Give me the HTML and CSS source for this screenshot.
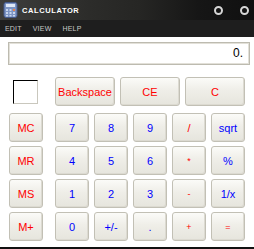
FILE: index.html
```html
<!DOCTYPE html>
<html lang="en">
<head>
    <meta charset="UTF-8">
    <title>Calculator</title>
    <link rel="stylesheet" href="styles.css">
</head>
<body>
    <div class="window">
        <!-- Title bar -->
        <div class="title-bar">
            <svg class="app-icon" width="16" height="16" viewBox="0 0 16 16">
                <rect x="1" y="0.5" width="13" height="15" rx="2" fill="#7d95c4" stroke="#44598a"/>
                <rect x="3" y="2" width="9" height="3" fill="#dfe8f6"/>
                <g fill="#c8d6ee">
                    <rect x="3" y="7" width="2" height="2"/><rect x="6.5" y="7" width="2" height="2"/><rect x="10" y="7" width="2" height="2" fill="#e8824a"/>
                    <rect x="3" y="10" width="2" height="2"/><rect x="6.5" y="10" width="2" height="2"/><rect x="10" y="10" width="2" height="2"/>
                    <rect x="3" y="13" width="2" height="1.5"/><rect x="6.5" y="13" width="2" height="1.5"/><rect x="10" y="13" width="2" height="1.5"/>
                </g>
            </svg>
            <span class="title">CALCULATOR</span>
            <span class="ring ring-min"></span>
            <span class="ring"></span>
        </div>

        <!-- Menu -->
        <div class="menu-bar">
            <span>EDIT</span>
            <span>VIEW</span>
            <span>HELP</span>
        </div>

        <div class="panel">
            <div class="display">0.</div>

            <div class="top-row">
                <div class="mem-box"></div>
                <button class="key wide red">Backspace</button>
                <button class="key wide red">CE</button>
                <button class="key wide red">C</button>
            </div>

            <div class="keypad">
                <button class="key red">MC</button>
                <button class="key blue">7</button>
                <button class="key blue">8</button>
                <button class="key blue">9</button>
                <button class="key red">/</button>
                <button class="key blue">sqrt</button>

                <button class="key red">MR</button>
                <button class="key blue">4</button>
                <button class="key blue">5</button>
                <button class="key blue">6</button>
                <button class="key red small">*</button>
                <button class="key blue">%</button>

                <button class="key red">MS</button>
                <button class="key blue">1</button>
                <button class="key blue">2</button>
                <button class="key blue">3</button>
                <button class="key red small">-</button>
                <button class="key blue">1/x</button>

                <button class="key red">M+</button>
                <button class="key blue">0</button>
                <button class="key blue">+/-</button>
                <button class="key blue">.</button>
                <button class="key red small">+</button>
                <button class="key red small">=</button>
            </div>
        </div>
    </div>
</body>
</html>
```

FILE: styles.css
```css
body {
    margin: 0;
    padding: 0;
    font-family: "Liberation Sans", Arial, sans-serif;
    background: #fff;
}

.window {
    width: 254px;
    height: 249px;
    box-sizing: border-box;
    border-bottom: 2px solid #111;
    display: flex;
    flex-direction: column;
}

.title-bar {
    height: 20px;
    display: flex;
    align-items: center;
    background: linear-gradient(to right, #3e3e3c, #2c2c2a 35%, #262624 55%, #161616 78%, #101010);
    color: #fff;
    padding-left: 3px;
}

.app-icon {
    flex: none;
}

.title {
    margin-left: 3px;
    font-size: 7.5px;
    font-weight: bold;
    letter-spacing: 0.6px;
    flex: 1;
}

.ring {
    width: 5px;
    height: 5px;
    border: 2px solid #d6d6d6;
    border-radius: 50%;
    margin-right: 5px;
}

.ring-min {
    margin-right: 17px;
}

.menu-bar {
    height: 17px;
    background: #1e1e1e;
    display: flex;
    align-items: center;
    gap: 11px;
    padding-left: 5px;
    color: #c8c8c8;
    font-size: 7px;
    letter-spacing: 0.2px;
}

.panel {
    padding: 5px 4px 0 8px;
}

.display {
    height: 23px;
    box-sizing: border-box;
    border: 1px solid #bdbbb0;
    box-shadow: inset 0 0 0 1px #e2e0d8;
    text-align: right;
    padding-right: 6px;
    font-size: 12px;
    line-height: 21px;
    color: #000;
}

.top-row {
    display: flex;
    align-items: flex-start;
    margin-top: 12px;
    gap: 5px;
}

.mem-box {
    width: 25px;
    height: 24px;
    box-sizing: border-box;
    margin: 3px 12px 0 5px;
    border-top: 1px solid #000;
    border-left: 1px solid #000;
    border-right: 1px solid #c9c7bd;
    border-bottom: 1px solid #c9c7bd;
}

.key {
    height: 29px;
    box-sizing: border-box;
    padding: 0;
    border: 1px solid #c2c0b5;
    border-radius: 3px;
    background: linear-gradient(#fbfbf8, #efeee8 45%, #e6e5dd);
    box-shadow: inset -1px -1px 0 #dcdad1;
    font-family: "Liberation Sans", Arial, sans-serif;
    font-size: 11px;
    cursor: pointer;
}

.key.wide {
    width: 60px;
}

.red {
    color: #f00;
}

.blue {
    color: #00f;
}

.key.small {
    font-size: 9px;
}

.keypad {
    display: grid;
    grid-template-columns: 41px repeat(5, 34px);
    grid-auto-rows: 29px;
    column-gap: 5px;
    row-gap: 4px;
    margin-top: 7px;
    margin-left: 1px;
}

.keypad .key {
    width: 34px;
}
```
